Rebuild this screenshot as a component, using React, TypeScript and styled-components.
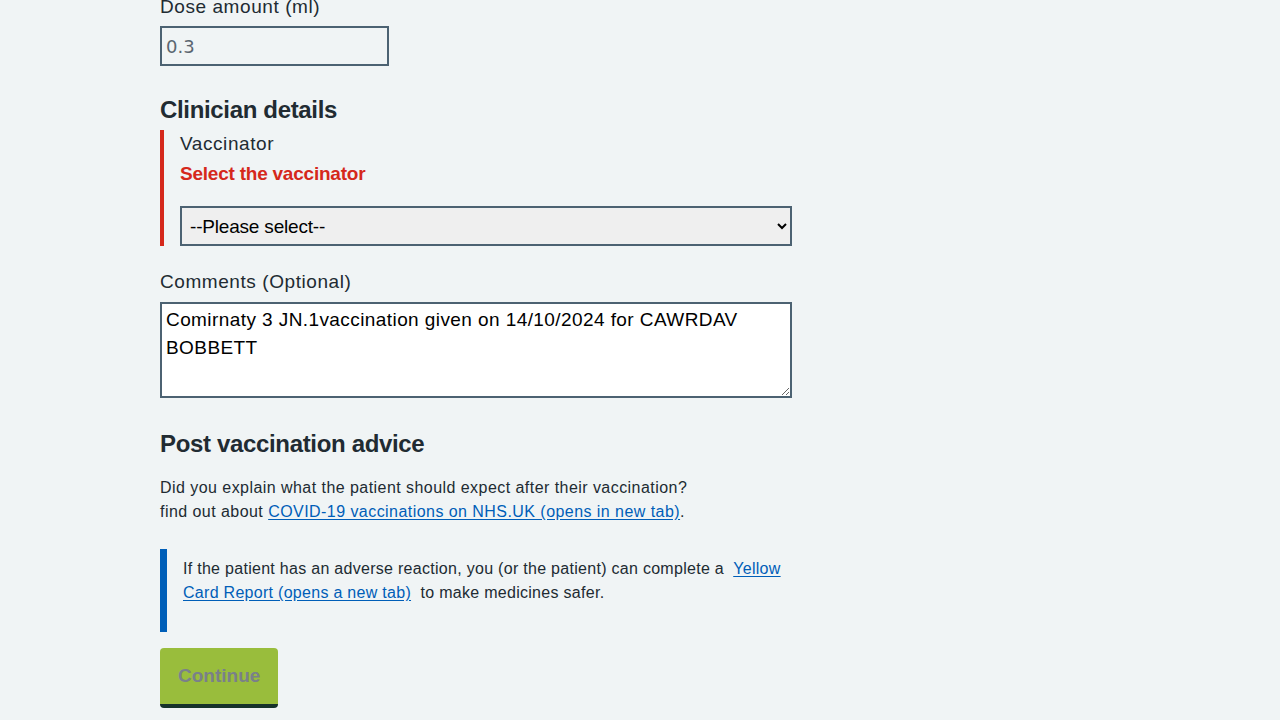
import React from "react";
import styled, { createGlobalStyle } from "styled-components";

const Global = createGlobalStyle`
  html, body { margin: 0; padding: 0; background: #f0f4f5; }
  body { font-family: "Liberation Sans", Arial, sans-serif; color: #212b32; }
  * { box-sizing: border-box; }
`;

const Page = styled.main`
  width: 632px;
  margin: -7px 0 0 160px;
  padding-bottom: 16px;
  display: flex;
  flex-direction: column;
`;

const Label = styled.label<{ $mb?: number }>`
  display: block;
  font-size: 19px;
  line-height: 28px;
  letter-spacing: 0.03em;
  color: #212b32;
  margin-bottom: ${(p) => p.$mb ?? 4}px;
`;

const DoseInput = styled.input`
  width: 229px;
  height: 40px;
  margin-top: 1px;
  border: 2px solid #4c6272;
  background: #f0f4f5;
  font-family: "DejaVu Sans", "Noto Sans", sans-serif;
  font-size: 18px;
  color: #5b6670;
  padding: 0 4px;
  outline: none;
`;

const Heading = styled.h2<{ $mt: number; $mb: number }>`
  font-size: 24px;
  line-height: 32px;
  font-weight: 700;
  letter-spacing: -0.014em;
  margin: ${(p) => p.$mt}px 0 ${(p) => p.$mb}px;
  color: #212b32;
`;

const ErrorGroup = styled.div`
  border-left: 4px solid #d5281b;
  padding-left: 16px;
  display: flex;
  flex-direction: column;
`;

const ErrorMessage = styled.span`
  display: block;
  color: #d5281b;
  font-weight: 700;
  font-size: 19px;
  line-height: 24px;
  letter-spacing: -0.012em;
  margin: 4px 0 20px;
`;

const Select = styled.select`
  width: 100%;
  height: 40px;
  border: 2px solid #4c6272;
  border-radius: 0;
  background: #efefef;
  font-family: "Liberation Sans", Arial, sans-serif;
  font-size: 19px;
  letter-spacing: -0.01em;
  color: #000;
  padding: 0 4px;
`;

const Field = styled.div`
  margin-top: 22px;
`;

const TextArea = styled.textarea`
  display: block;
  width: 100%;
  height: 96px;
  border: 2px solid #4c6272;
  background: #fff;
  font-family: "Liberation Sans", Arial, sans-serif;
  font-size: 19px;
  line-height: 28px;
  letter-spacing: 0.022em;
  color: #000;
  padding: 2px 4px;
  resize: vertical;
`;

const Para = styled.p<{ $ls?: number }>`
  font-size: 16px;
  line-height: 24px;
  letter-spacing: ${(p) => p.$ls ?? 0.028}em;
  margin: 0;
  color: #212b32;
`;

const Link = styled.a`
  color: #005eb8;
  text-decoration: underline;
  text-underline-offset: 2px;
`;

const Inset = styled.div`
  margin-top: 25px;
  border-left: 7px solid #005eb8;
  padding: 8px 0 27px 16px;
`;

const Button = styled.button`
  align-self: flex-start;
  margin-top: 16px;
  font-family: "Liberation Sans", Arial, sans-serif;
  font-size: 19px;
  font-weight: 700;
  line-height: 32px;
  padding: 12px 18px;
  border: 0;
  border-bottom: 4px solid #16322a;
  border-radius: 4px;
  background: #99bd3c;
  color: #7a808a;
`;

export default function App() {
  return (
    <>
      <Global />
      <Page>
        <Label htmlFor="dose">Dose amount (ml)</Label>
        <DoseInput id="dose" defaultValue="0.3" readOnly />

        <Heading $mt={28} $mb={4}>Clinician details</Heading>
        <ErrorGroup>
          <Label htmlFor="vacc" $mb={0}>Vaccinator</Label>
          <ErrorMessage>Select the vaccinator</ErrorMessage>
          <Select id="vacc" defaultValue="">
            <option value="">--Please select--</option>
          </Select>
        </ErrorGroup>

        <Field>
          <Label htmlFor="comments" $mb={6}>Comments (Optional)</Label>
          <TextArea
            id="comments"
            defaultValue="Comirnaty 3 JN.1vaccination given on 14/10/2024 for CAWRDAV BOBBETT"
          />
        </Field>

        <Heading $mt={30} $mb={16}>Post vaccination advice</Heading>
        <Para>
          Did you explain what the patient should expect after their vaccination?
          <br />
          find out about <Link href="#">COVID-19 vaccinations on NHS.UK (opens in new tab)</Link>.
        </Para>

        <Inset>
          <Para $ls={0.018}>
            If the patient has an adverse reaction, you (or the patient) can complete a&nbsp;{" "}
            <Link href="#">Yellow Card Report (opens a new tab)</Link>&nbsp; to make medicines safer.
          </Para>
        </Inset>

        <Button disabled>Continue</Button>
      </Page>
    </>
  );
}
